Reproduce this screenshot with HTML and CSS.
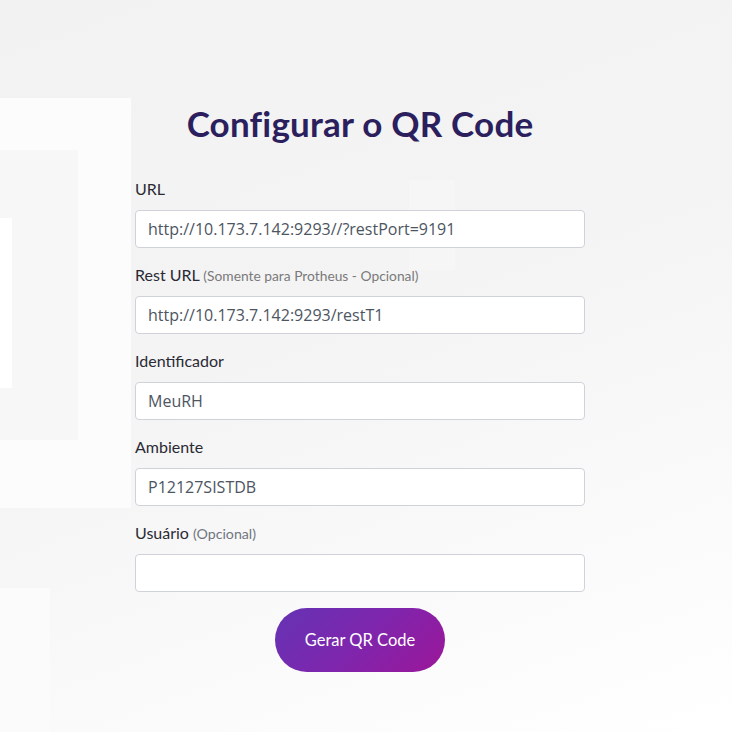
FILE: index.html
```html
<!DOCTYPE html>
<html lang="pt-BR">
<head>
<meta charset="utf-8">
<title>Configurar o QR Code</title>
<link rel="stylesheet" href="styles.css">
</head>
<body>
<div class="bg" aria-hidden="true">
  <div class="blk blk-a"></div>
  <div class="blk blk-b"></div>
  <div class="blk blk-c"></div>
  <div class="blk blk-d"></div>
  <div class="blk blk-e"></div>
</div>
<main class="page">
  <form class="card">
    <h1 class="title">Configurar o QR Code</h1>
    <div class="group">
      <label class="label">URL</label>
      <input class="field" type="text" value="http://10.173.7.142:9293//?restPort=9191">
    </div>
    <div class="group">
      <label class="label">Rest URL <span class="hint">(Somente para Protheus - Opcional)</span></label>
      <input class="field" type="text" value="http://10.173.7.142:9293/restT1">
    </div>
    <div class="group">
      <label class="label">Identificador</label>
      <input class="field" type="text" value="MeuRH">
    </div>
    <div class="group">
      <label class="label">Ambiente</label>
      <input class="field" type="text" value="P12127SISTDB">
    </div>
    <div class="group">
      <label class="label">Usuário <span class="hint hint-lg">(Opcional)</span></label>
      <input class="field" type="text" value="">
    </div>
    <button class="btn" type="button">Gerar QR Code</button>
  </form>
</main>
</body>
</html>
```

FILE: styles.css
```css
html, body {
  margin: 0;
  padding: 0;
  height: 100%;
}
body {
  font-family: "Lato", "Noto Sans", sans-serif;
  background: linear-gradient(160deg, #f2f2f2 0%, #f4f4f4 45%, #fafafa 75%, #ffffff 100%);
  position: relative;
  overflow: hidden;
}
.bg {
  position: absolute;
  inset: 0;
  pointer-events: none;
}
.blk {
  position: absolute;
  background: #ffffff;
}
.blk-a { left: 0; top: 98px; width: 131px; height: 410px; background: #fcfcfc; }
.blk-b { left: 0; top: 150px; width: 78px; height: 290px; background: #f7f7f7; }
.blk-c { left: 0; top: 218px; width: 12px; height: 170px; background: #ffffff; }
.blk-d { left: 0; top: 588px; width: 50px; height: 144px; background: #fbfbfb; }
.blk-e { left: 409px; top: 180px; width: 46px; height: 90px; background: #f6f6f6; }

.page {
  position: relative;
  width: 720px;
  display: flex;
  justify-content: center;
}
.card {
  width: 450px;
  padding-top: 103px;
  display: flex;
  flex-direction: column;
}
.title {
  margin: 0 0 34px;
  text-align: center;
  font-family: "Lato", sans-serif;
  font-weight: 700;
  font-size: 35px;
  line-height: 40px;
  color: #2c1f5e;
  letter-spacing: 0.2px;
}
.group {
  display: flex;
  flex-direction: column;
  margin-bottom: 15px;
}
.label {
  display: block;
  font-size: 16px;
  line-height: 24px;
  height: 24px;
  margin-bottom: 9px;
  color: #2a2a35;
}
.hint {
  font-size: 13.8px;
  color: #7a7a7a;
}
.hint-lg {
  font-size: 14.2px;
  color: #6f7680;
}
.field {
  box-sizing: border-box;
  height: 38px;
  width: 100%;
  margin: 0;
  padding: 0 12px;
  border: 1px solid #cfd3d9;
  border-radius: 4px;
  background: #ffffff;
  font-family: "Open Sans", sans-serif;
  font-size: 16px;
  color: #4d5562;
  outline: none;
}
.btn {
  align-self: center;
  margin-top: 1px;
  width: 170px;
  height: 64px;
  border: none;
  border-radius: 32px;
  background: linear-gradient(135deg, #6533b4 0%, #7e26ad 50%, #9c1699 100%);
  color: #ffffff;
  font-family: "Lato", sans-serif;
  font-size: 16.5px;
  cursor: pointer;
}
```
